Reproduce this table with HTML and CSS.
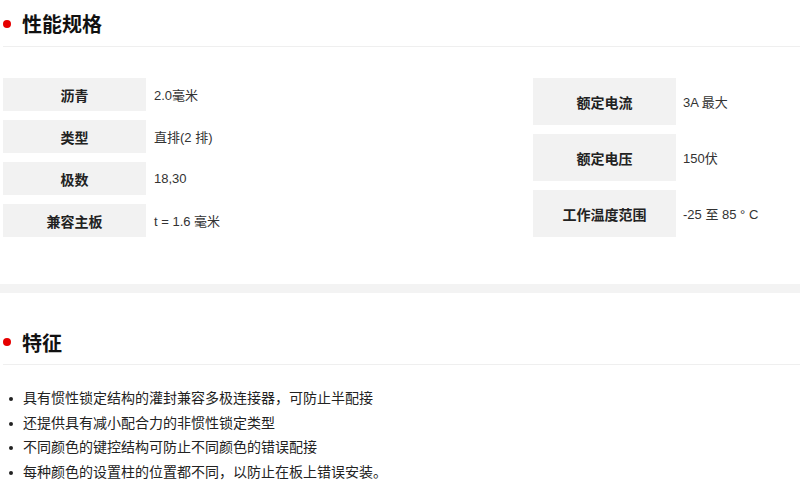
FILE: index.html
```html
<!DOCTYPE html>
<html lang="zh-CN">
<head>
<meta charset="utf-8">
<title>性能规格</title>
<link rel="stylesheet" href="styles.css">
</head>
<body>
<section class="section">
  <h2 class="sec-title"><span class="dot"></span>性能规格</h2>
  <div class="specs">
    <div class="spec-table spec-left">
      <div class="row"><div class="label">沥青</div><div class="value">2.0毫米</div></div>
      <div class="row"><div class="label">类型</div><div class="value">直排(2 排)</div></div>
      <div class="row"><div class="label">极数</div><div class="value">18,30</div></div>
      <div class="row"><div class="label">兼容主板</div><div class="value">t = 1.6 毫米</div></div>
    </div>
    <div class="spec-table spec-right">
      <div class="row"><div class="label">额定电流</div><div class="value">3A 最大</div></div>
      <div class="row"><div class="label">额定电压</div><div class="value">150伏</div></div>
      <div class="row"><div class="label">工作温度范围</div><div class="value">-25 至 85 ° C</div></div>
    </div>
  </div>
</section>
<div class="band"></div>
<section class="section section-2">
  <h2 class="sec-title"><span class="dot"></span>特征</h2>
  <ul class="features">
    <li>具有惯性锁定结构的灌封兼容多极连接器，可防止半配接</li>
    <li>还提供具有减小配合力的非惯性锁定类型</li>
    <li>不同颜色的键控结构可防止不同颜色的错误配接</li>
    <li>每种颜色的设置柱的位置都不同，以防止在板上错误安装。</li>
  </ul>
</section>
</body>
</html>
```
FILE: styles.css
```css
html, body {
  margin: 0;
  padding: 0;
  background: #fff;
}
body {
  font-family: "Liberation Sans", "Noto Sans CJK SC", sans-serif;
  color: #222;
}
.section {
  padding-left: 3px;
}
.sec-title {
  margin: 0;
  height: 46px;
  display: flex;
  align-items: center;
  gap: 11px;
  font-size: 20px;
  font-weight: bold;
  color: #111;
  border-bottom: 1px solid #efefef;
  padding-top: 1px;
  box-sizing: border-box;
  height: 47px;
}
.dot {
  width: 8px;
  height: 8px;
  border-radius: 50%;
  background: #e60000;
  flex: none;
}
.specs {
  display: flex;
  align-items: stretch;
  margin-top: 31px;
}
.spec-table {
  display: flex;
  flex-direction: column;
  gap: 9px;
}
.spec-left {
  width: 530px;
}
.spec-left .row {
  height: 33px;
}
.spec-right {
  flex: 1;
}
.spec-right .row {
  flex: 1;
}
.row {
  display: flex;
  align-items: stretch;
}
.label {
  flex: none;
  width: 143px;
  background: #f2f2f2;
  display: flex;
  align-items: center;
  justify-content: center;
  font-size: 14px;
  font-weight: bold;
  color: #222;
}
.value {
  display: flex;
  align-items: center;
  padding-left: 8px;
  font-size: 13px;
  color: #333;
}
.spec-right .value {
  padding-left: 7px;
}
.band {
  height: 9px;
  background: #f3f3f3;
  margin-top: 47px;
}
.section-2 {
  margin-top: 26px;
}
.section-2 .sec-title {
  height: 46px;
}
.features {
  list-style: none;
  margin: 21px 0 0;
  padding: 0;
}
.features li {
  position: relative;
  padding-left: 20px;
  font-size: 14px;
  line-height: 24.7px;
  color: #222;
}
.features li::before {
  content: "";
  position: absolute;
  left: 6px;
  top: 11px;
  width: 4px;
  height: 4px;
  border-radius: 50%;
  background: #222;
}
```
